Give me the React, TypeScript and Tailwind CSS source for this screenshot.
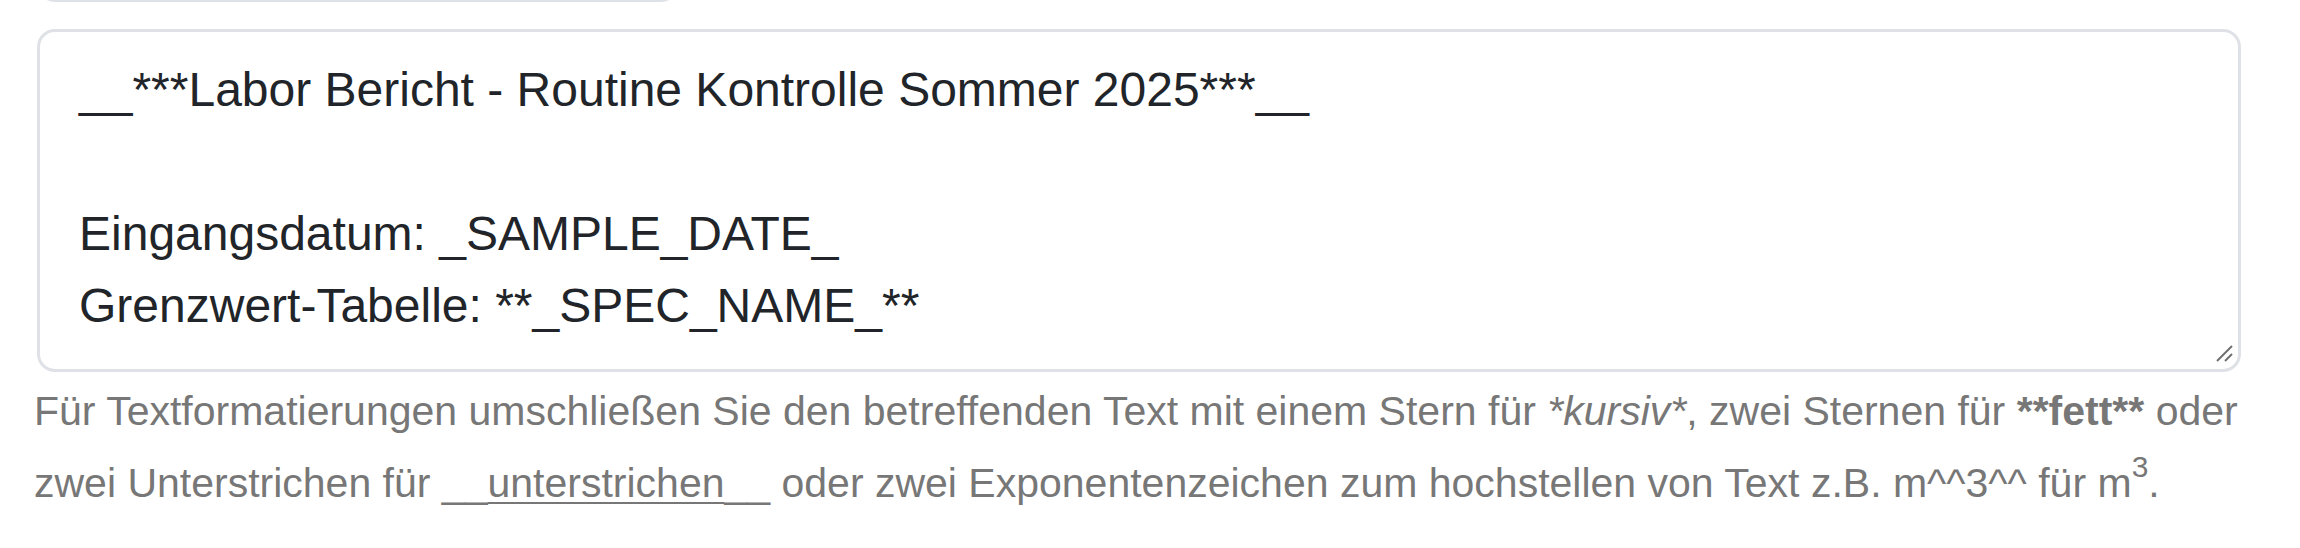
import React from 'react';

const templateText = `__***Labor Bericht - Routine Kontrolle Sommer 2025***__

Eingangsdatum: _SAMPLE_DATE_
Grenzwert-Tabelle: **_SPEC_NAME_**`;

const App: React.FC = () => {
  return (
    <div className="w-[2300px] h-[548px] overflow-hidden bg-white font-['Liberation_Sans',Arial,sans-serif]">
      <div className="pl-[37px] w-[2241px]">
        {/* bottom edge of the field above, mostly scrolled out of view */}
        <div className="w-[642px] h-[60px] -mt-[58px] border-[3px] border-[#dee2e6] rounded-[18px] bg-white" />

        <div className="relative mt-[27px]">
          <textarea
            defaultValue={templateText}
            spellCheck={false}
            className="block w-full h-[343px] resize-none bg-white border-[3px] border-[#dee2e6] rounded-[18px] pl-[39px] pr-[36px] pt-[22px] pb-[18px] text-[48px] leading-[72px] text-[#212529] font-['Liberation_Sans',Arial,sans-serif] outline-none"
          />
          {/* resize grip */}
          <svg className="absolute right-[8px] bottom-[10px] pointer-events-none" width="17" height="17" viewBox="0 0 17 17">
            <line x1="1" y1="16" x2="16" y2="1" stroke="#6f6f6f" strokeWidth="2" />
            <line x1="9" y1="16" x2="16" y2="9" stroke="#6f6f6f" strokeWidth="2" />
          </svg>
        </div>

        <p className="-ml-[3px] mt-[3px] text-[41px] leading-[72px] text-[#777777] whitespace-nowrap">
          Für Textformatierungen umschließen Sie den betreffenden Text mit einem Stern für <em>*kursiv*</em>, zwei Sternen für <strong>**fett**</strong> oder
          <br />
          zwei Unterstrichen für __<span className="underline underline-offset-[5px] decoration-[2px]">unterstrichen</span>__ oder zwei Exponentenzeichen zum hochstellen von Text z.B. m^^3^^ für m<sup className="text-[30px] relative -top-[20px] align-baseline leading-none">3</sup>.
        </p>
      </div>
    </div>
  );
};

export default App;
